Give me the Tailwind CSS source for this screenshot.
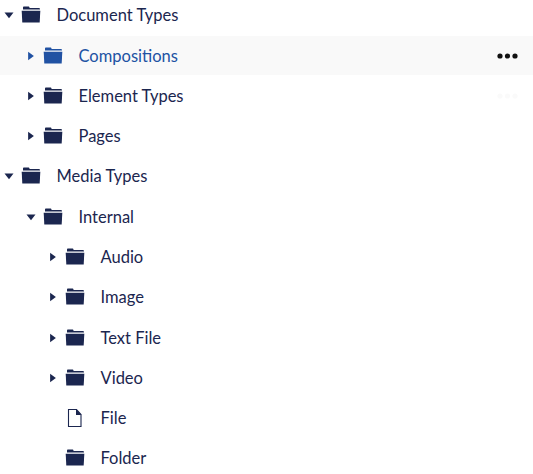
<!DOCTYPE html>
<html lang="en">
<head>
<meta charset="utf-8">
<title>Settings tree</title>
<script src="https://cdn.jsdelivr.net/npm/@tailwindcss/browser@4"></script>
</head>
<body class="bg-white overflow-hidden">
<svg class="hidden">
  <symbol id="folder" viewBox="0 0 20 18"><path d="M2 3.600V1.4Q2 .5 2.800 .5H7.800Q8.500 .5 8.600 2H18.300Q19 2 19 3.600Z"/><path d="M.7 4.700H19.300L18.700 16.500H1.300Z"/></symbol>
  <symbol id="file" viewBox="0 0 20 20"><path d="M3.500 1.500H11.500L16 6.500V18.500H3.500Z" fill="none" stroke="currentColor" stroke-width="1.100"/><path d="M11 1V7H16.500Z"/></symbol>
  <symbol id="down" viewBox="0 0 10 10"><path d="M.5 2.500H9.500L5 8.200Z"/></symbol>
  <symbol id="right" viewBox="0 0 10 10"><path d="M2.100 .7V9.300L7.900 5Z"/></symbol>
  <symbol id="dots" viewBox="0 0 22 6"><circle cx="3" cy="3" r="2.600"/><circle cx="10.500" cy="3" r="2.600"/><circle cx="18" cy="3" r="2.600"/></symbol>
</svg>
<ul id="tree" class="-mt-[4.25px] w-full font-['Lato',sans-serif] text-[16.5px] text-[#1b264f]"></ul>
<script>
const rows = [
  ['Document Types', 0, 'down', 'folder'],
  ['Compositions', 1, 'right', 'folder', 'active'],
  ['Element Types', 1, 'right', 'folder', 'faint'],
  ['Pages', 1, 'right', 'folder'],
  ['Media Types', 0, 'down', 'folder'],
  ['Internal', 1, 'down', 'folder'],
  ['Audio', 2, 'right', 'folder'],
  ['Image', 2, 'right', 'folder'],
  ['Text File', 2, 'right', 'folder'],
  ['Video', 2, 'right', 'folder'],
  ['File', 2, '', 'file'],
  ['Folder', 2, '', 'folder'],
];
const indent = ['pl-[3.5px]', 'pl-[25.5px]', 'pl-[47.5px]'];
document.getElementById('tree').innerHTML = rows.map(([name, level, arrow, icon, state]) => `
  <li class="flex h-[40.267px] items-center border-b border-transparent bg-clip-padding ${indent[level]} pr-[14px] ${state === 'active' ? 'bg-[#f9f9f9] text-[#2152a3]' : ''}">
    <svg class="size-[10px] shrink-0 fill-current">${arrow ? `<use href="#${arrow}"/>` : ''}</svg>
    <svg class="ml-[7.5px] w-5 shrink-0 fill-current ${icon === 'file' ? 'h-5' : 'h-[18px]'}"><use href="#${icon}"/></svg>
    <span class="ml-[15.5px] grow whitespace-nowrap leading-6">${name}</span>
    ${state ? `<svg class="h-[6px] w-[22px] fill-current ${state === 'active' ? 'text-[#111111]' : 'text-[#fafafa]'}"><use href="#dots"/></svg>` : ''}
  </li>`).join('');
</script>
</body>
</html>
